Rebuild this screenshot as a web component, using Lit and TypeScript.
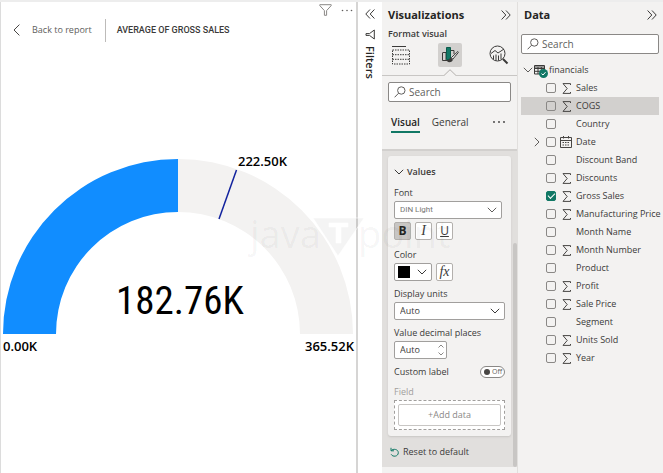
import { LitElement, html, svg, css } from "lit";
import { customElement, property } from "lit/decorators.js";
import { classMap } from "lit/directives/class-map.js";

const base = css`
  * { box-sizing: border-box; }
  :host {
    font-family: "Open Sans", "Noto Sans", sans-serif;
    font-size: 9px;
    line-height: 14px;
    color: #3b3a39;
  }
  svg { display: block; flex: none; }
  button, input, select { font: inherit; color: inherit; margin: 0; border-radius: 0; }
  button { background: none; border: 0; padding: 0; cursor: pointer; }
  h2 { margin: 0; font-size: 11px; line-height: 18px; font-weight: 700; color: #252423; }
  .head { display: flex; justify-content: space-between; align-items: center; height: 18px; }
  .search {
    display: flex; align-items: center; gap: 3px; height: 20px; padding: 0 5px;
    background: #fff; border: 1px solid #8a8886; border-radius: 2px;
  }
  .search input {
    flex: 1; min-width: 0; border: 0; padding: 0; background: none; outline: 0;
    font-size: 10px; line-height: 16px;
  }
  .search input::placeholder { color: #605e5c; opacity: 1; }
`;

const chevrons = (left = false) => svg`
  <svg width="10" height="10" viewBox="0 0 10 10" fill="none" stroke="#3b3a39">
    <path d=${left ? "M5 .5 .8 5 5 9.5M9.4 .5 5.2 5 9.4 9.5" : "M.6 .5 4.8 5 .6 9.5M5 .5 9.2 5 5 9.5"} />
  </svg>`;

const magnifier = svg`
  <svg width="12" height="12" viewBox="0 0 12 12" fill="none" stroke="#605e5c">
    <circle cx="7.3" cy="4.5" r="3.7" /><path d="M4.6 7.2 .6 11.3" />
  </svg>`;

const chevronDown = (color = "#3b3a39") => svg`
  <svg class="chev" width="10" height="6" viewBox="0 0 10 6" fill="none" stroke=${color}>
    <path d="M.8 .8 5 5 9.2 .8" />
  </svg>`;

@customElement("gauge-view")
export class GaugeView extends LitElement {
  static styles = [base, css`
    :host { display: block; background: #fff; border-left: 1px solid #dcdcdc; }
    .tools { display: flex; justify-content: flex-end; align-items: center; gap: 9px; height: 16px; padding-right: 3px; }
    .bar { display: flex; align-items: center; height: 24px; padding-left: 12px; }
    .back { display: flex; align-items: center; gap: 12px; padding-right: 13px; color: #605e5c; }
    .bar h1 {
      margin: 0; padding-left: 11px; border-left: 1px solid #bdbbb9; height: 23px;
      font: 500 9px/22px Roboto, sans-serif; color: #3b3a39; text-transform: uppercase;
    }
    .gauge { width: 100%; height: auto; margin-top: 104px; }
    .num { font: 600 13px "Open Sans", sans-serif; fill: #000; }
    .big { font: 39px "Roboto Condensed", "Liberation Sans Narrow", "DejaVu Sans Condensed", sans-serif; fill: #000; }
  `];
  render() {
    return html`
      <div class="tools">
        <button aria-label="Filters on this visual">
          <svg width="13" height="12" viewBox="0 0 13 12" fill="none" stroke="#8a8886">
            <path d="M.8 .7H12.2V1.6L7.6 6.6V11.3H5.4V6.6L.8 1.6Z" />
          </svg>
        </button>
        <button aria-label="More options">
          <svg width="12" height="3" viewBox="0 0 12 3" fill="#605e5c">
            <circle cx="1.5" cy="1.5" r=".8" /><circle cx="6" cy="1.5" r=".8" /><circle cx="10.5" cy="1.5" r=".8" />
          </svg>
        </button>
      </div>
      <div class="bar">
        <button class="back">
          <svg width="7" height="12" viewBox="0 0 7 12" fill="none" stroke="#484644"><path d="M6.4 .6 1 6 6.4 11.4" /></svg>
          Back to report
        </button>
        <h1>Average of Gross Sales</h1>
      </div>
      <svg class="gauge" viewBox="0 0 355 210" role="img" aria-label="Average of Gross Sales">
        <path fill="#f3f2f1" d="M177 13A175 175 0 0 1 352 188H299A122 122 0 0 0 177 66Z" />
        <path fill="#118dff" d="M2 188A175 175 0 0 1 177 13V66A122 122 0 0 0 55 188Z" />
        <path stroke="#12239e" stroke-width="1.5" d="M235.5 24 218 73" />
        <text class="num" x="237" y="20">222.50K</text>
        <text class="num" x="2" y="205">0.00K</text>
        <text class="num" x="353" y="205" text-anchor="end">365.52K</text>
        <text class="big" x="179" y="168" text-anchor="middle">182.76K</text>
      </svg>`;
  }
}

@customElement("filters-rail")
export class FiltersRail extends LitElement {
  static styles = [base, css`
    :host {
      display: flex; flex-direction: column; align-items: center; gap: 10px; padding-top: 7px;
      background: #fff; border-left: 2px solid #d6d5d4;
    }
    .label { writing-mode: vertical-rl; font-size: 11px; line-height: 14px; font-weight: 600; color: #252423; margin-top: -4px; }
  `];
  render() {
    return html`
      <button aria-label="Expand filters">${chevrons(true)}</button>
      <svg width="10" height="11" viewBox="0 0 10 11" fill="none" stroke="#3b3a39">
        <path d="M9.3 1V10L4.5 6.4H1V4.6H4.5Z" />
      </svg>
      <span class="label">Filters</span>`;
  }
}

@customElement("format-pane")
export class FormatPane extends LitElement {
  static styles = [base, css`
    :host { display: flex; flex-direction: column; background: #f3f2f1; border-right: 1px solid #e1dfdd; }
    .top { padding: 4px 6px 0; }
    .sub { font-weight: 600; margin-top: 3px; height: 14px; }
    .modes { display: flex; justify-content: space-between; align-items: center; margin: 2px 0; padding: 0 0 0 1px; }
    .modes button { width: 24px; height: 24px; display: grid; place-items: center; }
    .modes .on { background: #d2d0ce; border-radius: 2px; }
    .notch { width: 100%; height: 7px; display: flex; }
    .notch i { flex: 1; border-bottom: 1px solid #c8c6c4; }
    .find { padding: 6px 6px 0; }
    .tabs { display: flex; align-items: center; gap: 12px; height: 22px; margin: 10px 12px 15px 9px; font-size: 10px; }
    .tabs button { height: 20px; border-bottom: 2px solid transparent; line-height: 16px; }
    .tabs .on { font-weight: 600; border-color: #117865; color: #252423; }
    .tabs .more { margin-left: auto; display: flex; align-items: center; }
    .scroll { display: flex; background: #e1dfdd; border-top: 2px solid #d2d0ce; height: 318px; }
    .body { flex: 1; min-width: 0; padding: 5px 0 0 6px; }
    .bar { width: 4px; margin: 92px 0 0 2px; background: #c8c6c4; border-radius: 2px; }
    .card { background: #f3f2f1; border-radius: 3px; padding: 8px 6px 6px; box-shadow: 0 1px 2px #c8c6c4; }
    .title { display: flex; align-items: center; gap: 3px; height: 16px; font-weight: 600; }
    .lab { display: block; height: 14px; margin: 6px 0 1px; }
    .box { display: grid; align-items: center; height: 18px; background: #fff; border: 1px solid #a19f9d; border-radius: 2px; }
    .box > * { grid-area: 1 / 1; }
    .box .chev { justify-self: end; margin-right: 4px; pointer-events: none; }
    .box select, .box input { appearance: none; width: 100%; border: 0; padding: 0 5px; background: none; outline: 0; height: 16px; line-height: 16px; }
    .box.font { margin-right: 3px; }
    .font select { color: #797775; font: 8px/16px Roboto, sans-serif; }
    .row { display: flex; gap: 4px; }
    .styles { margin: 3px 0 8px; }
    .tool { width: 17px; height: 18px; background: #fff; border: 1px solid #b3b0ad; border-radius: 2px; display: grid; place-items: center; font-size: 12px; line-height: 16px; }
    .tool.on { background: #c8c6c4; }
    .bold { font-weight: 700; color: #252423; }
    .ital, .fx { font-family: "Liberation Serif", serif; font-style: italic; font-size: 14px; }
    .und { text-decoration: underline; }
    .color { width: 38px; }
    .swatch { width: 12px; height: 12px; margin-left: 3px; background: #000; }
    .spin { width: 53px; }
    .spin svg { justify-self: end; margin-right: 2px; }
    .toggle { display: flex; justify-content: space-between; align-items: center; margin-top: 6px; height: 14px; }
    .switch { position: relative; display: flex; align-items: center; width: 25px; height: 12px; padding-left: 11px; border: 1px solid #8a8886; border-radius: 6px; background: #fff; font-size: 7px; line-height: 10px; color: #605e5c; }
    .switch input { appearance: none; position: absolute; left: 3px; top: 2px; width: 6px; height: 6px; border-radius: 50%; background: #484644; }
    .dim { color: #a19f9d; }
    .drop { border: 1px dashed #a19f9d; background: #fff; padding: 3px; }
    .drop button { width: 100%; height: 22px; border: 1px solid #c8c6c4; border-radius: 2px; color: #8a8886; }
    .reset { display: flex; align-items: center; gap: 4px; margin: 9px 0 0 2px; }
  `];
  render() {
    return html`
      <div class="top">
        <div class="head"><h2>Visualizations</h2><button aria-label="Collapse">${chevrons()}</button></div>
        <div class="sub">Format visual</div>
        <div class="modes">
          <button aria-label="Build visual">
            <svg width="20" height="20" viewBox="0 0 20 20" fill="none" stroke="#3b3a39">
              <path d="M1 1.5H15" /><path stroke-dasharray="1.5 1" d="M1.5 5H18.5V19H1.5ZM1.5 9.7H18.5M1.5 14.3H18.5" />
            </svg>
          </button>
          <button class="on" aria-label="Format visual">
            <svg width="20" height="20" viewBox="0 0 20 20">
              <path fill="none" stroke="#3b3a39" d="M2.5 8V15.5H9M2.5 7.5H6V15M10 5.5H14V9" />
              <path fill="#117865" stroke="#0b5a4a" d="M6.5 2.5H10.5V14.5H6.5Z" />
              <path fill="#f3f2f1" stroke="#3b3a39" d="M17.8 6.5 11.3 12.7 12.8 14.2 18.3 7.5Z" />
              <path fill="#3b3a39" d="M11 12.8C9 13 9 15.5 7 16.8 10 17.7 12.7 17 12.8 14.5Z" />
            </svg>
          </button>
          <button aria-label="Analytics">
            <svg width="20" height="20" viewBox="0 0 20 20" fill="none" stroke="#3b3a39">
              <circle cx="8.5" cy="8.5" r="7.5" />
              <path d="M2 8.5 6 5.5 9 8 15 4M4.5 14V10.5M7 15.5V9.5M9.5 15.5V10.5M12 14.5V8.5" />
              <path stroke-width="2" d="M14 14 18.5 18.5" />
            </svg>
          </button>
        </div>
      </div>
      <div class="notch"><i></i><svg width="12" height="7" viewBox="0 0 12 7" fill="none" stroke="#b3b0ad"><path d="M0 6.5 6 .7 12 6.5" /></svg><i></i></div>
      <div class="find"><label class="search">${magnifier}<input placeholder="Search" aria-label="Search formatting" /></label></div>
      <div class="tabs">
        <button class="on">Visual</button><button>General</button>
        <button class="more" aria-label="More"><svg width="12" height="2" viewBox="0 0 12 2" fill="#3b3a39"><circle cx="1" cy="1" r=".9" /><circle cx="6" cy="1" r=".9" /><circle cx="11" cy="1" r=".9" /></svg></button>
      </div>
      <div class="scroll">
        <div class="body">
          <div class="card">
            <div class="title">${chevronDown()}Values</div>
            <label class="lab" for="font">Font</label>
            <div class="box font"><select id="font"><option>DIN Light</option></select>${chevronDown("#605e5c")}</div>
            <div class="row styles">
              <button class="tool bold on">B</button><button class="tool ital">I</button><button class="tool und">U</button>
            </div>
            <label class="lab" for="color">Color</label>
            <div class="row">
              <button id="color" class="box color" aria-label="Color"><span class="swatch"></span>${chevronDown()}</button>
              <button class="tool fx">fx</button>
            </div>
            <label class="lab" for="units">Display units</label>
            <div class="box"><select id="units"><option>Auto</option></select>${chevronDown()}</div>
            <label class="lab" for="places">Value decimal places</label>
            <div class="box spin"><input id="places" value="Auto" />
              <svg width="6" height="12" viewBox="0 0 6 12" fill="none" stroke="#8a8886"><path d="M.5 3.5 3 1 5.5 3.5M.5 8.5 3 11 5.5 8.5" /></svg>
            </div>
            <div class="toggle"><label for="custom">Custom label</label><span class="switch"><input id="custom" type="checkbox" />Off</span></div>
            <span class="lab dim">Field</span>
            <div class="drop"><button>+Add data</button></div>
          </div>
          <button class="reset">
            <svg width="9" height="10" viewBox="0 0 9 10" fill="none" stroke="#117865"><path d="M1 .8V3.8H4M1.2 3.6C3 1.4 8.3 2 8.3 5.7 8.3 9.7 2.6 10.3 1.2 7.3" /></svg>
            Reset to default
          </button>
        </div>
        <div class="bar"></div>
      </div>`;
  }
}

interface Field { name: string; icon?: "sum" | "date"; checked?: boolean; active?: boolean; }

@customElement("data-pane")
export class DataPane extends LitElement {
  @property({ attribute: false }) fields: Field[] = [
    { name: "Sales", icon: "sum" },
    { name: "COGS", icon: "sum", active: true },
    { name: "Country" },
    { name: "Date", icon: "date" },
    { name: "Discount Band" },
    { name: "Discounts", icon: "sum" },
    { name: "Gross Sales", icon: "sum", checked: true },
    { name: "Manufacturing Price", icon: "sum" },
    { name: "Month Name" },
    { name: "Month Number", icon: "sum" },
    { name: "Product" },
    { name: "Profit", icon: "sum" },
    { name: "Sale Price", icon: "sum" },
    { name: "Segment" },
    { name: "Units Sold", icon: "sum" },
    { name: "Year", icon: "sum" },
  ];
  static styles = [base, css`
    :host { display: block; background: #f3f2f1; padding: 4px 4px 0 3px; }
    .head { padding: 0 2px 0 3px; }
    .search { margin-top: 10px; }
    .table { display: flex; align-items: center; height: 18px; margin-top: 7px; padding-left: 2px; gap: 1px; }
    .icon { position: relative; margin-right: 3px; }
    .badge { position: absolute; left: 5px; top: 4px; }
    ul { list-style: none; margin: 0; padding: 0; }
    li { display: grid; grid-template-columns: 10px 10px 12px 1fr; column-gap: 4px; align-items: center; height: 18px; padding-left: 11px; white-space: nowrap; }
    li.active { background: #d2d0ce; }
    li svg { justify-self: center; }
    li input {
      appearance: none; width: 10px; height: 10px; border: 1px solid #8a8886; border-radius: 2px;
      display: grid; place-items: center;
    }
    li input:checked { background: #117865; border-color: #117865; }
    li input:checked::after { content: ""; width: 6px; height: 3px; border: solid #fff; border-width: 0 0 1px 1px; transform: rotate(-45deg); margin-bottom: 2px; }
  `];
  private icon(f: Field) {
    if (f.icon === "sum") return html`
      <svg width="9" height="11" viewBox="0 0 9 11" fill="none" stroke="#484644"><path d="M8.5 2V.6H1L5.2 5.5 1 10.4H8.5V9" /></svg>`;
    if (f.icon === "date") return html`
      <svg width="12" height="12" viewBox="0 0 12 12" fill="none" stroke="#484644">
        <path d="M.5 1.5H11.5V11.5H.5ZM.5 4.5H11.5M3.5 0V2.5M8.5 0V2.5" /><path stroke-dasharray="1.5 1" d="M2.5 6.5H10M2.5 9H9" />
      </svg>`;
    return html`<span></span>`;
  }
  render() {
    return html`
      <div class="head"><h2>Data</h2><button aria-label="Collapse">${chevrons()}</button></div>
      <label class="search">${magnifier}<input placeholder="Search" aria-label="Search fields" /></label>
      <div class="table">
        ${chevronDown("#605e5c")}
        <span class="icon">
          <svg width="11" height="10" viewBox="0 0 11 10" fill="none" stroke="#3b3a39"><path d="M.5 .5H10.5V9H.5ZM.5 2H10.5M.5 3.5H10.5M.5 6.3H10.5M4 2V9M7.3 2V9" /></svg>
          <svg class="badge" width="9" height="9" viewBox="0 0 9 9"><circle cx="4.5" cy="4.5" r="4.5" fill="#117865" /><path fill="none" stroke="#fff" d="M2.5 4.6 4 6 6.5 3.2" /></svg>
        </span>
        <span>financials</span>
      </div>
      <ul>
        ${this.fields.map((f, i) => html`
          <li class=${classMap({ active: !!f.active })}>
            ${f.icon === "date" ? html`<svg width="6" height="10" viewBox="0 0 6 10" fill="none" stroke="#605e5c"><path d="M.8 .8 5 5 .8 9.2" /></svg>` : html`<span></span>`}
            <input id="f${i}" type="checkbox" .checked=${!!f.checked} />
            ${this.icon(f)}
            <label for="f${i}">${f.name}</label>
          </li>`)}
      </ul>`;
  }
}

@customElement("app-root")
export class AppRoot extends LitElement {
  static styles = css`
    :host {
      position: relative; display: grid; grid-template-columns: minmax(0, 1fr) 26px 136px 145px;
      min-height: 100vh; box-sizing: border-box; border-top: 2px solid #ededed; background: #f3f2f1; overflow: hidden;
    }
    .mark { position: absolute; left: 240px; top: 197px; pointer-events: none; }
    .word { font: 38px "Open Sans", sans-serif; }
  `;
  render() {
    return html`
      <gauge-view></gauge-view>
      <filters-rail></filters-rail>
      <format-pane></format-pane>
      <data-pane></data-pane>
      <svg class="mark" width="230" height="68" viewBox="0 0 230 68" fill="#000" fill-opacity=".045" aria-hidden="true">
        <text class="word" x="10" y="49">java</text>
        <path d="M73 19H124L98 57ZM89 24V28H96V44H101V28H108V24Z" fill-rule="evenodd" stroke="#fff" stroke-opacity=".6" />
        <text class="word" x="118" y="49">point</text>
      </svg>`;
  }
}
